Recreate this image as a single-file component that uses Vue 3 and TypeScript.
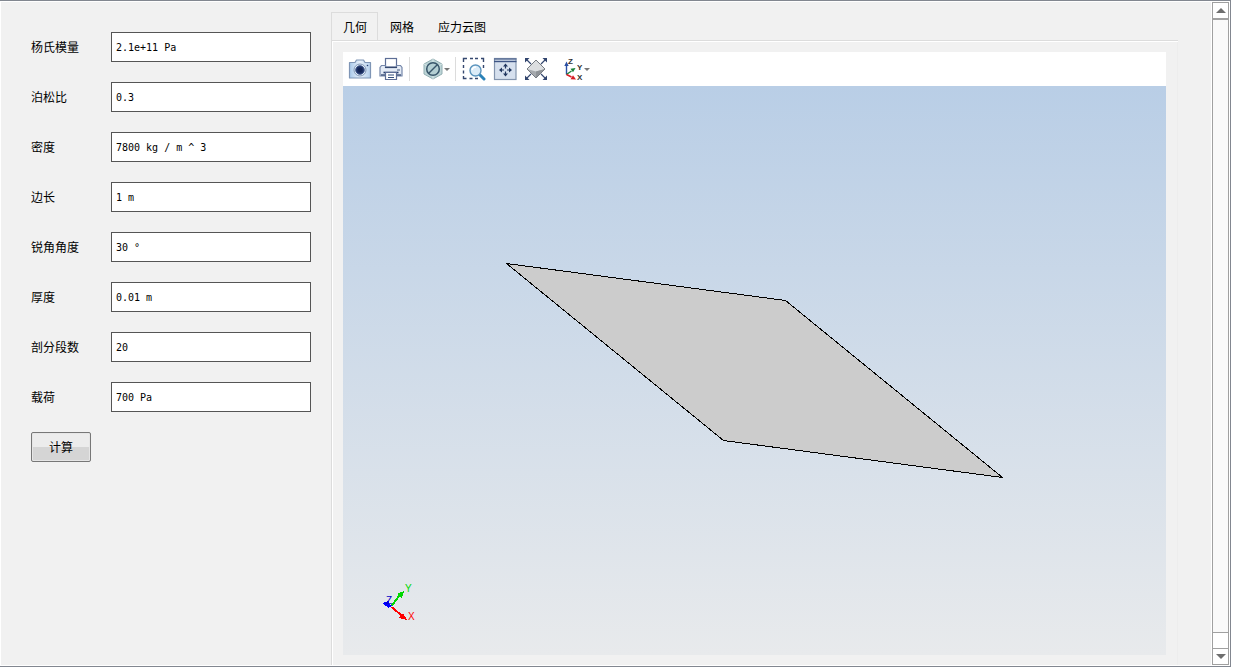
<script setup lang="ts">
import { ref } from 'vue'

interface Field {
  id: string
  label: string
  value: string
}

const fields = ref<Field[]>([
  { id: 'young', label: '杨氏模量', value: '2.1e+11 Pa' },
  { id: 'poisson', label: '泊松比', value: '0.3' },
  { id: 'density', label: '密度', value: '7800 kg / m ^ 3' },
  { id: 'side', label: '边长', value: '1 m' },
  { id: 'angle', label: '锐角角度', value: '30 °' },
  { id: 'thickness', label: '厚度', value: '0.01 m' },
  { id: 'segments', label: '剖分段数', value: '20' },
  { id: 'load', label: '载荷', value: '700 Pa' },
])

const tabs: string[] = ['几何', '网格', '应力云图']
const activeTab = ref(0)
</script>

<template>
  <div class="window">
    <main class="content">
      <form class="form" @submit.prevent>
        <div v-for="f in fields" :key="f.id" class="row">
          <label :for="f.id">{{ f.label }}</label>
          <input :id="f.id" v-model="f.value" type="text" />
        </div>
        <button class="compute" type="submit">计算</button>
      </form>

      <section class="results">
        <div class="tabs" role="tablist">
          <button
            v-for="(t, i) in tabs"
            :key="t"
            type="button"
            role="tab"
            class="tab"
            :class="{ active: i === activeTab }"
            :aria-selected="i === activeTab"
            @click="activeTab = i"
          >{{ t }}</button>
        </div>

        <div class="panel">
          <div class="toolbar">
            <div class="group">
              <button type="button" class="tool" aria-label="Snapshot">
                <svg width="24" height="24" viewBox="0 0 24 24">
                  <defs>
                    <linearGradient id="cam" x1="0" y1="0" x2="1" y2="0">
                      <stop offset="0" stop-color="#a9c9ea" /><stop offset="0.5" stop-color="#e8f1fb" /><stop offset="1" stop-color="#b4cfec" />
                    </linearGradient>
                  </defs>
                  <path d="M1.500 5.500h5.500l1.500-2.500h7l1.500 2.500h5.500v15.500h-21z" fill="url(#cam)" stroke="#7f95b5" stroke-width="1.200" stroke-linejoin="round" />
                  <circle cx="12" cy="13" r="6" fill="#e3edf8" stroke="#8197b5" stroke-width="1" />
                  <circle cx="12" cy="13" r="4.300" fill="#1c2f62" stroke="#4a6295" />
                  <circle cx="12" cy="13" r="2.200" fill="#132453" />
                  <circle cx="19.500" cy="8.500" r="0.800" fill="#274174" />
                </svg>
              </button>
              <button type="button" class="tool" aria-label="Print">
                <svg width="24" height="24" viewBox="0 0 24 24">
                  <rect x="6.500" y="1.500" width="11" height="8.500" fill="#fff" stroke="#5d6e96" stroke-width="1.200" />
                  <path d="M2.500 8.500h4v2h11v-2h4l1.500 2v8.500h-22v-8.500z" fill="#e4ebf5" stroke="#7587aa" stroke-width="1.200" />
                  <path d="M6 10.500h12" stroke="#35486f" stroke-width="1.200" />
                  <path d="M18 13h3" stroke="#45587f" />
                  <path d="M2 18h20" stroke="#45587f" stroke-width="1.500" />
                  <path d="M4.500 15.500h15" stroke="#233a6a" stroke-width="1.600" />
                  <path d="M6.500 15.500h11v7h-11z" fill="#fff" stroke="#5d6e96" stroke-width="1.200" />
                  <path d="M9 18h6M9 20.500h6" stroke="#35507d" />
                </svg>
              </button>
            </div>
            <span class="sep"></span>
            <div class="group clip">
              <button type="button" class="tool menu" aria-label="Clipping">
                <svg width="22" height="24" viewBox="0 0 22 24">
                  <path d="M11 2l9 5v10l-9 5-9-5v-10z" fill="#bdd5d7" stroke="#93afb3" />
                  <path d="M11 2v20M2 7l9 5 9-5" stroke="#d6e5e5" fill="none" />
                  <circle cx="11" cy="12" r="6.300" fill="#b4cfd3" stroke="#38566b" stroke-width="1.500" />
                  <path d="M6.500 16.500l9-9" stroke="#38566b" stroke-width="1.500" />
                </svg>
                <span class="caret"></span>
              </button>
            </div>
            <span class="sep"></span>
            <div class="group view">
              <button type="button" class="tool" aria-label="Zoom box">
                <svg width="24" height="24" viewBox="0 0 24 24">
                  <path d="M1.500 5v-3.500h3.500M8 1.500h3M13 1.500h3M19 1.500h2.500v3.500M1.500 8v3M1.500 13.500v3M1.500 19v2.500h3M7.500 21.500h3M13 21.500h3M21.500 8v3" fill="none" stroke="#35486f" stroke-width="1.400" />
                  <path d="M18 18l4 4" stroke="#2b82b8" stroke-width="3" stroke-linecap="round" />
                  <circle cx="13.500" cy="13.500" r="5.500" fill="#dcecf8" stroke="#5b94bd" stroke-width="1.400" />
                  <path d="M10 13a4 4 0 0 1 4-3" fill="none" stroke="#fff" stroke-width="1.500" />
                </svg>
              </button>
              <button type="button" class="tool" aria-label="Zoom extents">
                <svg width="24" height="24" viewBox="0 0 24 24">
                  <rect x="1.500" y="1.500" width="21.500" height="21" fill="#d6e0ee" stroke="#8394ae" stroke-width="1.200" />
                  <path d="M1 2h22.500" stroke="#5c6f95" stroke-width="1.400" />
                  <path d="M1 4.500h22.500" stroke="#3e5484" stroke-width="1.400" />
                  <path d="M12.500 6.500l2.500 3h-5zM12.500 19.500l2.500-3h-5zM6 13l3-2.500v5zM19 13l-3-2.500v5z" fill="#21365f" />
                  <path d="M12.500 9v2.500M12.500 14.500v2.500M8.500 13h2.500M14 13h2.500" stroke="#21365f" stroke-width="1.200" />
                </svg>
              </button>
              <button type="button" class="tool" aria-label="Zoom to selection">
                <svg width="24" height="24" viewBox="0 0 24 24">
                  <path d="M2 2l5 5M22 2l-5 5M2 22l5-5M22 22l-5-5" stroke="#35486f" stroke-width="1.200" />
                  <path d="M1 1h4.500l-4.500 4.500zM23 1h-4.500l4.500 4.500zM1 23v-4.500l4.500 4.500zM23 23v-4.500l-4.500 4.500z" fill="#30446d" />
                  <path d="M12 3l9 9-9 9-9-9z" fill="#a6aaae" />
                  <path d="M12 3l9 9-9 2.500-9-2.500z" fill="#dcdee0" />
                  <path d="M12 14.500v6.500l9-9z" fill="#8f9397" />
                  <path d="M12 3l9 9-9 9-9-9z" fill="none" stroke="#777c82" />
                </svg>
              </button>
            </div>
            <button type="button" class="tool menu axes" aria-label="View orientation">
              <svg width="22" height="24" viewBox="0 0 22 24">
                <path d="M4.500 17.500v-9" stroke="#2a4fa3" stroke-width="1.400" />
                <path d="M4.500 4.500l2.200 4.500h-4.400z" fill="#2a4fa3" />
                <path d="M4.500 17.500l5-3.500" stroke="#198237" stroke-width="1.400" />
                <path d="M13.500 11l-5 .8 2.500 3.500z" fill="#198237" />
                <path d="M4.500 17.500l5 2.500" stroke="#d91c23" stroke-width="1.400" />
                <path d="M14 22.500l-5.500-.3 2.500-4z" fill="#d91c23" />
                <text x="6" y="7" class="axis-label">Z</text>
                <text x="15" y="13" class="axis-label">Y</text>
                <text x="15" y="23" class="axis-label">X</text>
              </svg>
              <span class="caret"></span>
            </button>
          </div>

          <div class="canvas">
            <svg class="scene" viewBox="0 0 823 569" role="img" aria-label="几何">
              <polygon points="163.5,177.500 442.500,214.500 659.500,391.500 380.500,354.500" fill="#ccc" stroke="#000" shape-rendering="crispEdges" />
              <g shape-rendering="crispEdges">
                <path d="M48.500 520l9-12" stroke="#00d800" stroke-width="2" />
                <path d="M61 505l-2 7-5-4z" fill="#00d800" />
                <path d="M48.500 521l12 10" stroke="#f00" stroke-width="2" />
                <path d="M64 534l-8-2 4-5z" fill="#f00" />
                <path d="M48.500 520l-4-1" stroke="#00f" stroke-width="2" />
                <path d="M39 517l7-2v7z" fill="#00f" />
              </g>
              <text x="62" y="506" class="triad" fill="#00d800">Y</text>
              <text x="65" y="534" class="triad" fill="#f00">X</text>
              <text x="43" y="518" class="triad" fill="#0000c8">Z</text>
            </svg>
          </div>
        </div>
      </section>
    </main>

    <div class="scrollbar">
      <button type="button" aria-label="Scroll up"><span class="arrow up"></span></button>
      <div class="track"><div class="thumb"></div></div>
      <button type="button" aria-label="Scroll down"><span class="arrow down"></span></button>
    </div>
  </div>
</template>

<style>
body {
  background: #fff;
}
</style>

<style scoped>
* {
  box-sizing: border-box;
}

.window {
  display: flex;
  gap: 1px;
  height: calc(100vh - 2px);
  min-height: 500px;
  margin-right: 2px;
  padding: 1px;
  border: solid #828790;
  border-width: 1px 1px 1px 0;
  background: #fff;
  font: 12px/16px "Liberation Sans", "Noto Sans CJK SC", sans-serif;
  color: #000;
}

button,
input {
  margin: 0;
  font: inherit;
  color: inherit;
  outline: none;
}

.content {
  flex: 1;
  min-width: 0;
  display: flex;
  gap: 20px;
  padding: 10px 33px 0 30px;
  background: #f1f1f1;
}

.form {
  width: 280px;
  flex: none;
  display: flex;
  flex-direction: column;
  align-items: flex-start;
  gap: 20px;
  padding-top: 20px;
}

.row {
  display: flex;
  align-items: center;
  width: 100%;
  height: 30px;
}

.row label {
  width: 80px;
  flex: none;
  padding-top: 2px;
}

.row input {
  flex: 1;
  min-width: 0;
  height: 30px;
  padding: 0 4px;
  border: 1px solid #555;
  background: #fff;
  font: 10px/16px "DejaVu Sans Mono", "Liberation Mono", monospace;
}

.compute {
  width: 60px;
  height: 30px;
  padding: 2px 0 0;
  border: 1px solid #777;
  border-radius: 2px;
  background: linear-gradient(#ececec 50%, #d5d5d5 50%);
  box-shadow: inset 0 0 0 1px #e6e6e6;
}

.results {
  flex: 1;
  min-width: 0;
  display: flex;
  flex-direction: column;
}

.tabs {
  display: flex;
}

.tab {
  height: 28px;
  padding: 4px 12px 0;
  border: 0;
  background: transparent;
}

.tab.active {
  padding: 3px 10px 0 11px;
  border: 1px solid #dcdcdc;
  border-bottom: 0;
}

.panel {
  flex: 1;
  min-height: 0;
  display: flex;
  flex-direction: column;
  padding: 11px 12px 10px 11px;
  border: solid #dcdcdc;
  border-width: 1px 0 0 1px;
  box-shadow: inset 1px 1px #fff, inset -1px 0 #ededed;
}

.toolbar {
  flex: none;
  display: flex;
  align-items: center;
  height: 34px;
  padding-left: 5px;
  background: #fff;
}

.group {
  display: flex;
  gap: 7px;
  padding-right: 6px;
}

.group.clip {
  padding: 0 5px 0 12px;
}

.group.view {
  padding: 0 14px 0 6px;
}

.tool {
  display: flex;
  align-items: center;
  padding: 0;
  border: 0;
  background: transparent;
}

.tool svg {
  display: block;
}

.sep {
  width: 1px;
  height: 24px;
  background: #dcdcdc;
}

.caret {
  border: solid transparent;
  border-width: 3px 3px 0;
  border-top-color: #777;
}

.axis-label {
  font: bold 8px "Liberation Sans", sans-serif;
  fill: #333;
}

.canvas {
  flex: 1;
  min-height: 0;
  background: linear-gradient(#b9cee6, #e8eaec);
}

.scene {
  display: block;
  width: 100%;
  height: 100%;
}

.triad {
  font: 10px "Liberation Sans", sans-serif;
}

.scrollbar {
  flex: none;
  width: 17px;
  display: flex;
  flex-direction: column;
}

.scrollbar button {
  flex: none;
  display: flex;
  align-items: center;
  justify-content: center;
  height: 17px;
  padding: 0;
  border: 1px solid #a0a0a0;
  background: #fff;
}

.arrow {
  border: solid transparent;
}

.arrow.up {
  border-width: 0 5px 5px;
  border-bottom-color: #6e6e6e;
}

.arrow.down {
  border-width: 5px 5px 0;
  border-top-color: #6e6e6e;
}

.track {
  flex: 1;
  padding-bottom: 15px;
  border: solid #a0a0a0;
  border-width: 0 1px;
  background: #fff;
}

.thumb {
  height: 100%;
  border: solid #a0a0a0;
  border-width: 1px 0;
  background: #f9f9f9;
}
</style>
